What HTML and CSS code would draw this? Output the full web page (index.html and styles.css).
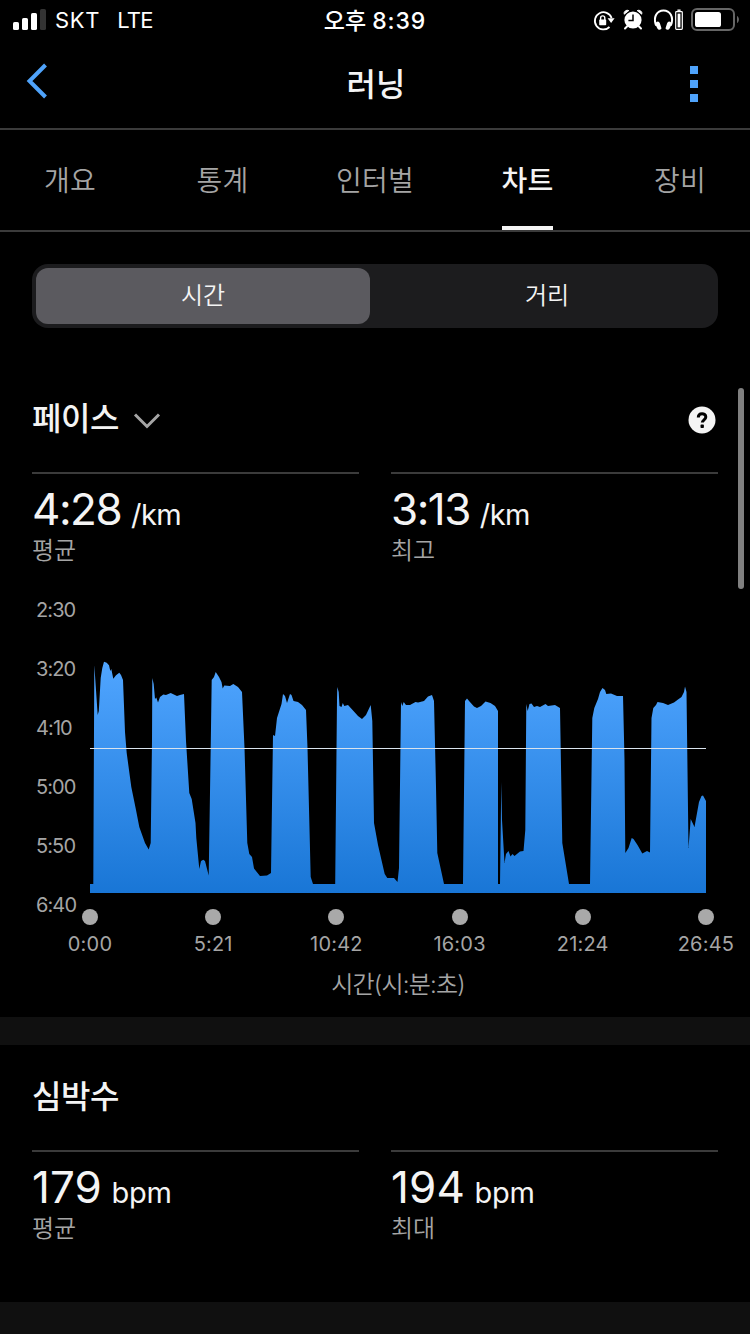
FILE: index.html
```html
<!DOCTYPE html>
<html lang="ko">
<head>
    <meta charset="UTF-8">
    <meta name="viewport" content="width=device-width, initial-scale=1.0">
    <title>러닝</title>
    <link rel="stylesheet" href="styles.css">
</head>
<body>
    <div class="status-bar">
        <div class="status-left">
            <svg class="signal" width="34" height="22" viewBox="0 0 34 22">
                <rect x="0" y="13" width="6" height="8" rx="1.6" fill="#fff"/>
                <rect x="9" y="9" width="6" height="12" rx="1.6" fill="#fff"/>
                <rect x="18" y="4" width="6" height="17" rx="1.6" fill="#fff"/>
                <rect x="27" y="0" width="6" height="21" rx="1.6" fill="#333"/>
            </svg>
            <span class="carrier">SKT</span>
            <span class="network">LTE</span>
        </div>
        <div class="clock">오후 <span class="clock-time">8:39</span></div>
        <div class="status-right">
            <svg width="22" height="22" viewBox="0 0 22 22">
                <path d="M16.5 18A8.6 8.6 0 1 1 18.6 9" fill="none" stroke="#fff" stroke-width="1.8"/>
                <path d="M14.6 9.200h7l-3.500 4.800z" fill="#fff"/>
                <rect x="6.2" y="10.600" width="7" height="5.6" rx="0.8" fill="#fff"/>
                <path d="M7.6 11V9a2.1 2.1 0 0 1 4.2 0v2" fill="none" stroke="#fff" stroke-width="1.4"/>
            </svg>
            <svg class="alarm" width="20" height="22" viewBox="0 0 20 22">
                <circle cx="10" cy="11" r="8.6" fill="#fff"/>
                <path d="M1.2 5.2a3.2 3.2 0 0 1 4.6-3.6zM18.8 5.2a3.2 3.2 0 0 0-4.6-3.6z" fill="#fff" stroke="#fff" stroke-width="1"/>
                <path d="M4 17.5l-2 2M16 17.5l2 2" stroke="#fff" stroke-width="2" stroke-linecap="round"/>
                <path d="M10 5.4v6.2H5.4" fill="none" stroke="#000" stroke-width="1.5"/>
            </svg>
            <svg class="headphones" width="30" height="22" viewBox="0 0 30 22">
                <path d="M2.2 16.5C-1.4 8 3.2 1.6 9.5 1.6S20.4 8 16.8 16.5" fill="none" stroke="#fff" stroke-width="2"/>
                <path d="M2.2 13.2C4 11.6 5.4 12.6 6.2 15.2L7.4 19c.3 1.6-2.8 2.6-4 .4L1.4 15.6zM16.8 13.2c-1.8-1.6-3.2-.6-4 2L11.6 19c-.3 1.6 2.8 2.6 4 .4l2-3.8z" fill="#fff"/>
                <rect x="21.7" y="2.7" width="6.6" height="17.6" rx="0.8" fill="none" stroke="#fff" stroke-width="1.2"/>
                <rect x="23.6" y="4.6" width="2.8" height="13.8" fill="#fff"/>
                <rect x="23.4" y="0.5" width="3.2" height="1.4" fill="#fff"/>
            </svg>
            <svg class="battery" width="49" height="24" viewBox="0 0 49 24">
                <rect x="1" y="1" width="42" height="21" rx="5" fill="none" stroke="#666" stroke-width="2"/>
                <rect x="4" y="4" width="26" height="15" rx="2.6" fill="#fff"/>
                <path d="M46 8c2.6 1.2 2.6 5.8 0 7z" fill="#666"/>
            </svg>
        </div>
    </div>

    <header class="nav-bar">
        <svg class="back" width="22" height="36" viewBox="0 0 22 36">
            <path d="M19.500 2L3.500 18l16 16" fill="none" stroke="#4fa3fb" stroke-width="4"/>
        </svg>
        <h1 class="nav-title">러닝</h1>
        <div class="more"><i></i><i></i><i></i></div>
    </header>

    <nav class="tabs">
        <a class="tab"><span>개요</span></a>
        <a class="tab"><span>통계</span></a>
        <a class="tab"><span>인터벌</span></a>
        <a class="tab active"><span>차트</span></a>
        <a class="tab"><span>장비</span></a>
    </nav>

    <div class="segmented">
        <div class="segment selected">시간</div>
        <div class="segment">거리</div>
    </div>

    <section class="pace">
        <div class="section-head">
            <h2>페이스</h2>
            <svg class="chevron" width="28" height="18" viewBox="0 0 28 18">
                <path d="M2 2.500l12 12 12-12" fill="none" stroke="#a5a5a5" stroke-width="3"/>
            </svg>
            <svg class="help" width="28" height="28" viewBox="0 0 28 28">
                <circle cx="14" cy="14" r="13.500" fill="#f4f4f4"/>
                <path d="M10.300 11.500c0-5.100 7.500-4.900 7.500-.5 0 2.800-3.500 2.800-3.500 5.600" fill="none" stroke="#000" stroke-width="3"/>
                <rect x="12.500" y="18.600" width="3.400" height="3.400" rx="0.800" fill="#000"/>
            </svg>
        </div>
        <div class="stats">
            <div class="stat">
                <div class="value">4:28 <span class="unit">/km</span></div>
                <div class="label">평균</div>
            </div>
            <div class="stat">
                <div class="value">3:13 <span class="unit">/km</span></div>
                <div class="label">최고</div>
            </div>
        </div>

        <div class="chart">
            <div class="y-axis">
                <span>2:30</span>
                <span>3:20</span>
                <span>4:10</span>
                <span>5:00</span>
                <span>5:50</span>
                <span>6:40</span>
            </div>
            <svg class="plot" width="616" height="293" viewBox="90 600 616 293">
                <defs>
                    <linearGradient id="paceFill" gradientUnits="userSpaceOnUse" x1="0" y1="662" x2="0" y2="893">
                        <stop offset="0" stop-color="#50a5ff"/>
                        <stop offset="1" stop-color="#1976d6"/>
                    </linearGradient>
                </defs>
                <path fill="url(#paceFill)" d="M90 893V884H93.300L94.300 665 97.700 715 98.800 711 100.700 678 102.300 668 104 661.700 106.700 662.700 109 665.300 110.300 671 111.300 669 113.300 678.700 116 675.300 119.300 672.700 121 675 123 680 125 732 126.700 753 131.300 787 136 810 139.300 827 145 843 148.700 849.500 150.700 843 152 741 152.300 678 153.700 684 155 699 156.300 697.500 158 702.500 160 697 163.300 694.500 166 695 170.700 693 177 696 180 695 184 694 186 741 189.300 793 191.700 799 195.500 823 196.300 838 199.300 869 201 861 203.300 859.700 205 861 208.700 875.500 210.700 748 211.700 680 214 677 215.700 672 219 677 221.500 682 222.700 688.500 224.300 685.500 230 686 233.300 684 238 687 242 692 244.500 748 247.300 843 249.300 854 252 857 254 868.500 260 876 267 875.500 271 873 273 735 275 736 277 718 281.500 704 283 694 285 696 287 703 290 694 291.500 695 293.500 701 298 702 302 705 306 710 307.500 748 310.700 877 313 884H335.200L337 700 337.300 687 338.700 692 339.500 706 341.500 707 342.800 703 344.300 706 348 705 353.500 711 358 716 362 719 366 715 370.700 705 372.300 721 374 823 378 845 384.700 874 387.300 878 394 878 397.500 882 399 868 401 702 402.300 706 403.700 702 406 705 410 705 415.500 702 418 702.500 424 701 428 696.500 432 695 434 701 436 787 437.300 853 444 884H463L465 701 467 698.500 469.500 701.500 474 706.500 477 708 481 706 485.500 701.500 490.500 703 495 706 498 711V884H500L501.300 782 502 820 504.500 863 506 854 508.500 851 510.500 856.500 512.500 854 514.500 856 520 851.500 523.500 851 525.300 830 526.300 704 527.700 711 529.500 704 531.500 703.500 534 707 537 706 540 707 545.500 704 548 706 555 705 560 708 562.300 843 569 884H590L592.300 718 594.300 708 598 699 600 692 602.500 688 605 690 606.300 694 611 693.500 617 696 623 696 624.500 760 625.300 853 628.500 848 631.700 838 633.500 839 637.500 845 642.300 853.500 647 851 650 852.500 651.500 718 653.300 708 656 705 657.500 702 663 703 668 705 674 702.500 678 699.500 681.500 697 684 692 685 686.500 686.500 692 688.500 848 690.700 819 694.500 827 699 802 701.500 796 703 795.500 706 801V893Z"/>
                <path d="M90 748.500H706" stroke="#d9e3ed" stroke-width="1.100"/>
            </svg>
            <div class="x-axis">
                <span>0:00</span>
                <span>5:21</span>
                <span>10:42</span>
                <span>16:03</span>
                <span>21:24</span>
                <span>26:45</span>
            </div>
            <div class="x-title">시간(시:분:초)</div>
        </div>
    </section>

    <section class="heart-rate">
        <div class="section-head">
            <h2>심박수</h2>
        </div>
        <div class="stats">
            <div class="stat">
                <div class="value">179 <span class="unit">bpm</span></div>
                <div class="label">평균</div>
            </div>
            <div class="stat">
                <div class="value">194 <span class="unit">bpm</span></div>
                <div class="label">최대</div>
            </div>
        </div>
    </section>

    <div class="scrollbar"></div>
</body>
</html>
```

FILE: styles.css
```css
* {
    box-sizing: border-box;
}
body {
    margin: 0;
    height: 1334px;
    overflow: hidden;
    position: relative;
    background-color: #101010;
    color: #f4f4f4;
    font-family: Inter, "Noto Sans CJK KR", sans-serif;
}
h1, h2 {
    margin: 0;
    font-weight: 500;
}
svg {
    display: block;
    flex-shrink: 0;
}

/* status bar */
.status-bar {
    display: grid;
    grid-template-columns: 1fr 120px 1fr;
    align-items: center;
    height: 40px;
    background-color: #000;
    color: #fff;
    font-size: 22px;
}
.status-left {
    display: flex;
    align-items: center;
    padding-left: 13px;
}
.signal {
    margin-top: -1px;
}
.carrier {
    margin-left: 8px;
    letter-spacing: 0.7px;
}
.network {
    margin-left: 17px;
    letter-spacing: -0.8px;
}
.clock {
    padding-top: 2px;
    text-align: center;
    font-size: 23px;
    font-weight: 500;
    line-height: 34px;
    white-space: nowrap;
}
.clock-time {
    font-weight: 550;
    letter-spacing: 0.9px;
}
.status-right {
    display: flex;
    align-items: center;
    justify-content: flex-end;
    padding-right: 10px;
}
.alarm {
    margin-left: 8px;
}
.headphones {
    margin-left: 11px;
}
.battery {
    margin-left: 7px;
}

/* title bar */
.nav-bar {
    display: flex;
    align-items: center;
    justify-content: space-between;
    height: 90px;
    padding: 0 52px 5px 26px;
    background-color: #000;
    border-bottom: 2px solid #3b3b3b;
}
.back {
    margin-top: -2px;
}
.nav-title {
    width: 120px;
    margin-left: 14px;
    padding-top: 6px;
    text-align: center;
    font-size: 32px;
    line-height: 40px;
}
.more {
    display: flex;
    flex-direction: column;
    gap: 6px;
    padding-top: 5px;
}
.more i {
    width: 8px;
    height: 8px;
    background-color: #4fa3fb;
}

/* tabs */
.tabs {
    display: flex;
    justify-content: space-between;
    height: 102px;
    padding: 0 30px;
    background-color: #000;
    border-bottom: 2px solid #3b3b3b;
}
.tab {
    display: flex;
    justify-content: center;
    width: 80px;
    height: 100px;
    color: #a5a5a5;
    font-size: 28px;
    font-weight: 350;
    letter-spacing: 0.2px;
    line-height: 102px;
}
.tab.active {
    color: #f4f4f4;
    font-weight: 500;
}
.tab.active span {
    border-bottom: 4px solid #f4f4f4;
}

/* time / distance switch */
.segmented {
    display: flex;
    height: 128px;
    padding: 36px;
    background-color: #000;
    position: relative;
    z-index: 0;
}
.segmented::before {
    content: "";
    position: absolute;
    z-index: -1;
    inset: 32px;
    border-radius: 16px;
    background-color: #1c1c1e;
}
.segment {
    width: 334px;
    margin-right: 10px;
    border-radius: 12px;
    font-size: 24px;
    font-weight: 350;
    line-height: 56px;
    text-align: center;
}
.segment:last-child {
    margin-right: 0;
}
.selected {
    background-color: #5b5a5f;
}

/* sections */
.pace {
    height: 657px;
    padding: 20px 32px 0;
    background-color: #000;
}
.heart-rate {
    height: 257px;
    margin-top: 28px;
    padding: 13px 32px 0;
    background-color: #000;
}
.section-head {
    display: flex;
    align-items: center;
    height: 92px;
    padding-bottom: 14px;
}
.section-head h2 {
    font-size: 32px;
    line-height: 40px;
    letter-spacing: -0.4px;
}
.chevron {
    margin: 4px 0 0 14px;
}
.help {
    margin: 1px 2px 0 auto;
}
.stats {
    display: grid;
    grid-template-columns: 1fr 1fr;
    gap: 32px;
}
.stat {
    height: 98px;
    border-top: 2px solid #3b3b3b;
}
.value {
    padding-top: 8px;
    font-size: 44px;
    line-height: 54px;
    letter-spacing: 0.1px;
    white-space: nowrap;
}
.pace .value {
    letter-spacing: -1.5px;
}
.unit {
    margin-left: -3px;
    font-size: 29px;
    letter-spacing: -0.2px;
}
.pace .unit {
    margin-left: -1px;
    letter-spacing: -0.6px;
}
.label {
    margin-top: -5px;
    color: #a5a5a5;
    font-size: 24px;
    font-weight: 350;
    line-height: 28px;
}

/* pace chart */
.chart {
    display: grid;
    grid-template-columns: 58px 616px;
    grid-template-rows: 293px auto auto;
    margin-top: 30px;
    color: #a5a5a5;
}
.y-axis {
    display: flex;
    flex-direction: column;
    padding-left: 4px;
    font-size: 20px;
    letter-spacing: -0.9px;
}
.y-axis span {
    height: 59px;
    flex-shrink: 0;
    line-height: 21px;
}
.plot {
    grid-column: 2;
}
.x-axis {
    grid-column: 2;
    display: flex;
    justify-content: space-between;
    margin: 16px -40px 0;
    font-size: 20px;
    letter-spacing: 0.2px;
}
.x-axis span {
    display: flex;
    flex-direction: column;
    align-items: center;
    gap: 7px;
    width: 80px;
    line-height: 24px;
}
.x-axis span::before {
    content: "";
    width: 16px;
    height: 16px;
    border-radius: 50%;
    background-color: #a9a9a9;
}
.x-title {
    grid-column: 2;
    margin-top: 12px;
    font-size: 24px;
    font-weight: 350;
    line-height: 34px;
    letter-spacing: -0.8px;
    text-align: center;
}

.scrollbar {
    position: absolute;
    top: 388px;
    right: 6px;
    width: 6px;
    height: 201px;
    border-radius: 3px;
    background-color: #808080;
}
```
